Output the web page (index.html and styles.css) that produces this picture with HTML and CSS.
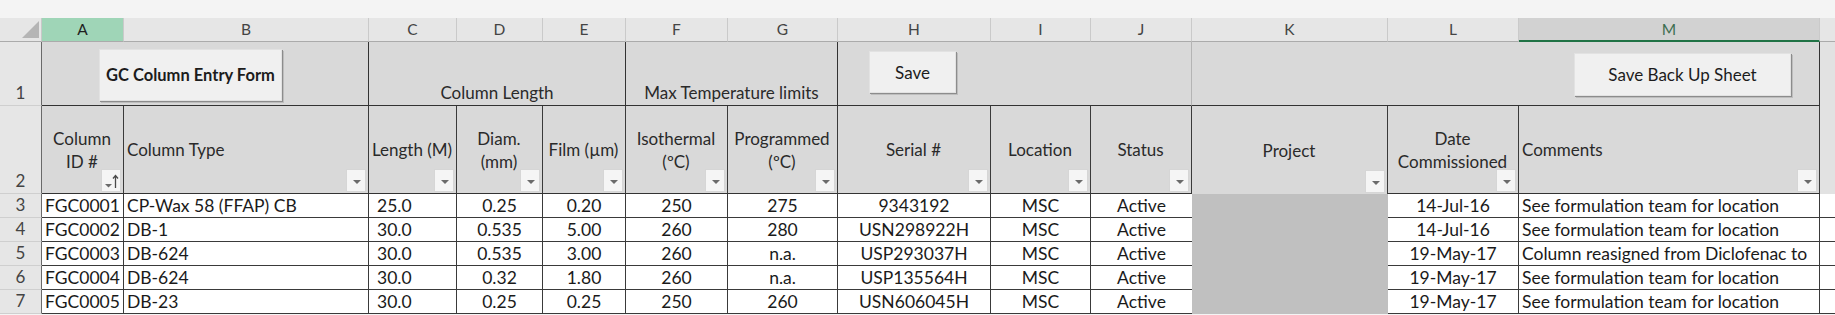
FILE: index.html
```html
<!DOCTYPE html>
<html lang="en">
  <head>
    <title>GC Column Register</title>
    <meta charset="utf-8">
    <link rel="stylesheet" href="styles.css">
  </head>
  <body>
    <div class="sheet">
      <!-- column letters -->
      <div class="corner"><span class="corner-tri"></span></div>
      <div class="colhdr picked">A</div>
      <div class="colhdr">B</div>
      <div class="colhdr">C</div>
      <div class="colhdr">D</div>
      <div class="colhdr">E</div>
      <div class="colhdr">F</div>
      <div class="colhdr">G</div>
      <div class="colhdr">H</div>
      <div class="colhdr">I</div>
      <div class="colhdr">J</div>
      <div class="colhdr">K</div>
      <div class="colhdr">L</div>
      <div class="colhdr current">M</div>
      <div class="colhdr rest"></div>

      <!-- row 1 : buttons and group titles -->
      <div class="rowhdr">1</div>
      <div class="top span2 edge-dark"><button class="btn btn-bold btn-entry">GC Column Entry Form</button></div>
      <div class="top span3 edge-dark group">Column Length</div>
      <div class="top span2 edge-dark group">Max Temperature limits</div>
      <div class="top span3 edge-light"><button class="btn btn-save">Save</button></div>
      <div class="top span3 edge-dark"><button class="btn btn-backup">Save Back Up Sheet</button></div>
      <div class="top rest"></div>

      <!-- row 2 : table headers -->
      <div class="rowhdr">2</div>
      <div class="th center">Column<br>ID #<span class="filter sorted"><svg width="20" height="23" viewBox="0 0 20 23"><path d="M4 15h7l-3.5 3.5z" fill="#6b6b6b"/><path d="M14.5 19V7M12 9.5l2.5-3 2.5 3" stroke="#4a4a4a" stroke-width="1.3" fill="none"/></svg></span></div>
      <div class="th">Column Type<span class="filter"></span></div>
      <div class="th center">Length (M)<span class="filter"></span></div>
      <div class="th center">Diam.<br>(mm)<span class="filter"></span></div>
      <div class="th center">Film (µm)<span class="filter"></span></div>
      <div class="th center">Isothermal<br>(ºC)<span class="filter"></span></div>
      <div class="th center">Programmed<br>(ºC)<span class="filter"></span></div>
      <div class="th center">Serial #<span class="filter"></span></div>
      <div class="th center">Location<span class="filter"></span></div>
      <div class="th center">Status<span class="filter"></span></div>
      <div class="th center open">Project<span class="filter"></span></div>
      <div class="th center">Date<br>Commissioned<span class="filter"></span></div>
      <div class="th">Comments<span class="filter"></span></div>
      <div class="top rest"></div>

      <!-- data -->
      <div class="rowhdr small">3</div>
      <div class="td">FGC0001</div><div class="td">CP-Wax 58 (FFAP) CB</div>
      <div class="td len">25.0</div><div class="td center">0.25</div><div class="td center">0.20</div>
      <div class="td center">250</div><div class="td center">275</div>
      <div class="td center">9343192</div><div class="td center">MSC</div><div class="td center last">Active</div>
      <div class="td blank"></div>
      <div class="td center first">14-Jul-16</div><div class="td">See formulation team for location</div>
      <div class="td rest"></div>

      <div class="rowhdr small">4</div>
      <div class="td">FGC0002</div><div class="td">DB-1</div>
      <div class="td len">30.0</div><div class="td center">0.535</div><div class="td center">5.00</div>
      <div class="td center">260</div><div class="td center">280</div>
      <div class="td center">USN298922H</div><div class="td center">MSC</div><div class="td center last">Active</div>
      <div class="td blank"></div>
      <div class="td center first">14-Jul-16</div><div class="td">See formulation team for location</div>
      <div class="td rest"></div>

      <div class="rowhdr small">5</div>
      <div class="td">FGC0003</div><div class="td">DB-624</div>
      <div class="td len">30.0</div><div class="td center">0.535</div><div class="td center">3.00</div>
      <div class="td center">260</div><div class="td center">n.a.</div>
      <div class="td center">USP293037H</div><div class="td center">MSC</div><div class="td center last">Active</div>
      <div class="td blank"></div>
      <div class="td center first">19-May-17</div><div class="td">Column reasigned from Diclofenac to</div>
      <div class="td rest"></div>

      <div class="rowhdr small">6</div>
      <div class="td">FGC0004</div><div class="td">DB-624</div>
      <div class="td len">30.0</div><div class="td center">0.32</div><div class="td center">1.80</div>
      <div class="td center">260</div><div class="td center">n.a.</div>
      <div class="td center">USP135564H</div><div class="td center">MSC</div><div class="td center last">Active</div>
      <div class="td blank"></div>
      <div class="td center first">19-May-17</div><div class="td">See formulation team for location</div>
      <div class="td rest"></div>

      <div class="rowhdr small">7</div>
      <div class="td">FGC0005</div><div class="td">DB-23</div>
      <div class="td len">30.0</div><div class="td center">0.25</div><div class="td center">0.25</div>
      <div class="td center">250</div><div class="td center">260</div>
      <div class="td center">USN606045H</div><div class="td center">MSC</div><div class="td center last">Active</div>
      <div class="td blank"></div>
      <div class="td center first">19-May-17</div><div class="td">See formulation team for location</div>
      <div class="td rest"></div>
    </div>
  </body>
</html>
```

FILE: styles.css
```css
html, body {
  margin: 0;
  background: #f4f4f4;
}

body {
  padding-top: 18px;
  font-family: Lato, "Open Sans", sans-serif;
  color: #1c1c1c;
}

.sheet {
  display: grid;
  grid-template-columns: 42px 82px 245px 88px 86px 83px 102px 110px 153px 100px 101px 196px 131px 301px 1fr;
  grid-template-rows: 24px 64px 88px repeat(5, 24px);
  overflow: hidden;
}

.sheet > div {
  box-sizing: border-box;
  min-width: 0;
  white-space: nowrap;
  overflow: hidden;
}

/* headers */
.corner {
  position: relative;
  background: #e6e6e6;
  border-right: 1px solid #c8c8c8;
  border-bottom: 1px solid #ababab;
}
.corner-tri {
  position: absolute;
  right: 2px;
  bottom: 3px;
  width: 0;
  height: 0;
  border-left: 17px solid transparent;
  border-bottom: 17px solid #b5b5b5;
}

.colhdr {
  background: #e6e6e6;
  border-right: 1px solid #cacaca;
  border-bottom: 1px solid #ababab;
  text-align: center;
  font-size: 15.5px;
  line-height: 23px;
  color: #444;
}
.colhdr.picked {
  background: #9fd5b7;
  color: #1f1f1f;
}
.colhdr.current {
  background: #d2d2d2;
  color: #3c6e4f;
  border-bottom: 2px solid #217346;
}
.colhdr.rest {
  border-right: none;
}

.rowhdr {
  background: #e6e6e6;
  border-right: 1px solid #6a6a6a;
  border-bottom: 1px solid #cfcfcf;
  text-align: center;
  font-size: 17px;
  color: #444;
  display: flex;
  align-items: flex-end;
  justify-content: center;
  padding-bottom: 1px;
  line-height: 22px;
}

/* row 1 */
.top {
  background: #d9d9d9;
  border-bottom: 1px solid #333;
  font-size: 17px;
  color: #2a2a2a;
  display: flex;
}
.span2 { grid-column: span 2; }
.span3 { grid-column: span 3; }
.edge-dark { border-right: 1px solid #333; }
.edge-light { border-right: 1px solid #b4b4b4; }
.top.rest { border-bottom: none; background: #e2e2e2; }

.group {
  align-items: flex-end;
  justify-content: center;
  padding-bottom: 2px;
}

.btn {
  font-family: inherit;
  font-size: 17px;
  color: #1c1c1c;
  background: #f0f0f0;
  border: 1px solid #e2e2e2;
  border-radius: 0;
  box-shadow: 1px 1px 0 #8c8c8c, 2px 2px 0 #bdbdbd;
  padding: 0;
}
.btn-bold { font-weight: bold; font-size: 16.5px; }
.btn-entry {
  width: 183px;
  height: 52px;
  margin: 7px 0 0 57px;
}
.btn-save {
  width: 87px;
  height: 42px;
  margin: 9px 0 0 31px;
}
.btn-backup {
  width: 217px;
  height: 43px;
  margin: 11px 0 0 382px;
}

/* row 2 */
.th {
  position: relative;
  background: #d9d9d9;
  border-right: 1px solid #3a3a3a;
  border-bottom: 1px solid #333;
  font-size: 17px;
  line-height: 23px;
  color: #2a2a2a;
  display: flex;
  align-items: center;
  padding: 0 4px 0 3px;
}
.th.center {
  justify-content: center;
  text-align: center;
}
.th.open {
  border-bottom: none;
}

.filter {
  position: absolute;
  right: 2px;
  bottom: 1px;
  width: 20px;
  height: 23px;
  box-sizing: border-box;
  background: #f5f5f5;
  border: 1px solid #d6d6d6;
}
.filter::after {
  content: "";
  position: absolute;
  left: 6px;
  top: 10px;
  border-left: 4px solid transparent;
  border-right: 4px solid transparent;
  border-top: 4px solid #6b6b6b;
}
.filter.sorted::after { display: none; }
.filter svg { display: block; margin: -1px; }

/* data rows */
.td {
  background: #fff;
  border-right: 1px solid #3a3a3a;
  border-bottom: 1px solid #3a3a3a;
  font-size: 17.5px;
  line-height: 24px;
  padding: 0 3px;
  color: #1a1a1a;
}
.td.center { text-align: center; }
.td.len { padding-left: 8px; }
.td.last { border-right: none; }
.td.blank {
  background: #c0c0c0;
  border: none;
}
.td.rest {
  border-right: none;
}
```
